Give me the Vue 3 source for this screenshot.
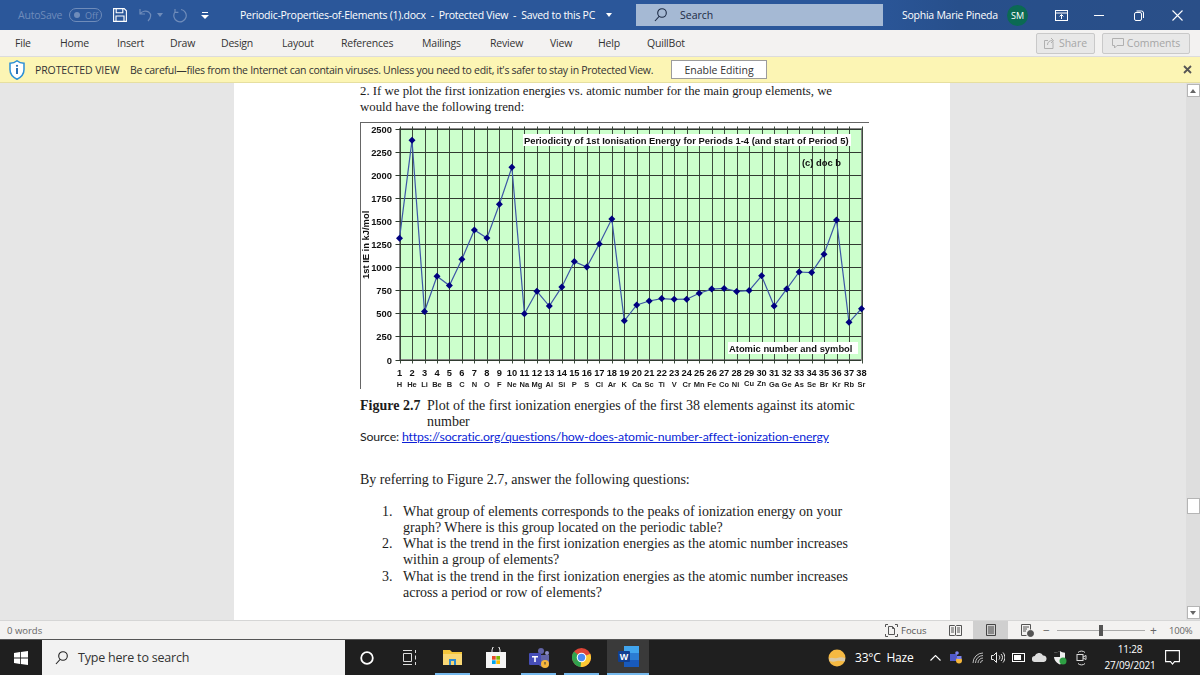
<template>
  <div class="app">
    <header class="titlebar">
      <span class="autosave">AutoSave</span>
      <span class="toggle"><i></i>Off</span>
      <svg class="save" width="14" height="14" viewBox="0 0 14 14" fill="none" stroke="#fff" stroke-width="1.1"><path d="M.6.6h10.6l2.2 2.2v10.6H.6z"/><path d="M3.2.8v4h6.6v-4M3 13.2V8h8v5.2"/></svg>
      <svg class="undo" width="15" height="14" viewBox="0 0 15 14" fill="none" stroke="#6f8cba" stroke-width="1.2"><path d="M1 1v5h5M1.3 5.8C3 3 7 2.4 9.6 4c3 2 2.6 6-.6 9"/></svg>
      <svg class="caret" width="6" height="4" viewBox="0 0 6 4" fill="#6f8cba"><path d="M0 0h6L3 4z"/></svg>
      <svg class="redo" width="15" height="15" viewBox="0 0 15 15" fill="none" stroke="#6f8cba" stroke-width="1.2"><path d="M9 1.5A6.2 6.2 0 1 1 3 4M3 1v3.4h3.4" /></svg>
      <svg class="qat" width="8" height="7" viewBox="0 0 8 7" fill="#fff"><path d="M1 0h6v1H1zM0 3h8L4 7z"/></svg>
      <span class="doctitle">Periodic-Properties-of-Elements (1).docx &nbsp;-&nbsp; Protected View &nbsp;-&nbsp; Saved to this PC</span>
      <svg class="titlecaret" width="6" height="4" viewBox="0 0 6 4" fill="#fff"><path d="M0 0h6L3 4z"/></svg>
      <div class="searchbox">
        <svg width="13" height="14" viewBox="0 0 13 14" fill="none" stroke="#1d2b45" stroke-width="1.1"><circle cx="8" cy="5" r="4.3"/><path d="M5 8.5 1 13"/></svg>
        <span>Search</span>
      </div>
      <span class="username">Sophia Marie Pineda</span>
      <span class="avatar">SM</span>
      <svg class="wbtn first" width="13" height="11" viewBox="0 0 13 11" fill="none" stroke="#fff"><rect x=".5" y=".5" width="12" height="10"/><path d="M.5 3h12M6.5 9V4.6M4.6 6.4l1.9-1.9 1.9 1.9"/></svg>
      <svg class="wbtn" width="10" height="10" viewBox="0 0 10 10" stroke="#fff"><path d="M0 5.5h10"/></svg>
      <svg class="wbtn restore" width="10" height="11" viewBox="0 0 10 11" fill="none" stroke="#fff"><rect x=".5" y="2.5" width="7" height="8" rx="1.5"/><path d="M2.5 1h5a2 2 0 0 1 2 2v5"/></svg>
      <svg class="wbtn" width="11" height="11" viewBox="0 0 11 11" stroke="#fff" stroke-width="1.1"><path d="m.5.5 10 10M10.500.5l-10 10"/></svg>
    </header>

    <nav class="ribbon">
      <div class="tabs">
        <span v-for="tab in tabs" :key="tab">{{ tab }}</span>
      </div>
      <button class="ghost share">
        <svg width="12" height="12" viewBox="0 0 12 12" fill="none" stroke="#b0b0b0"><path d="M9 4.500v7H.5V3.500H4M3.500 8c0-3 2-4.500 5-4.500M7 1l2.500 2.500L7 6"/></svg>
        Share
      </button>
      <button class="ghost comments">
        <svg width="12" height="11" viewBox="0 0 12 11" fill="none" stroke="#b0b0b0"><path d="M.5.5h11v7H5L2.500 10V7.500h-2z"/></svg>
        Comments
      </button>
    </nav>

    <div class="infobar">
      <svg class="shield" width="16" height="20" viewBox="0 0 16 20"><path d="M8 .8c2 1.700 4.300 2.400 7 2.500v6.200c0 4.500-3 7.800-7 9.700-4-1.900-7-5.200-7-9.700V3.300C3.700 3.200 6 2.500 8 .8z" fill="#fff" stroke="#2b8fd6" stroke-width="1.500"/><path d="M7 8h2v6H7z" fill="#2b6fb3"/><circle cx="8" cy="5.800" r="1.100" fill="#2b6fb3"/></svg>
      <strong>PROTECTED VIEW</strong>
      <span class="warning">Be careful—files from the Internet can contain viruses. Unless you need to edit, it's safer to stay in Protected View.</span>
      <button class="enable">Enable Editing</button>
      <svg class="infoclose" width="9" height="9" viewBox="0 0 9 9" stroke="#555" stroke-width="1.800"><path d="m1 1 7 7M8 1 1 8"/></svg>
    </div>

    <main class="workspace">
      <article class="page">
        <p class="line first">2. If we plot the first ionization energies vs. atomic number for the main group elements, we<br>would have the following trend:</p>

        <svg class="chart" width="520" height="270" viewBox="360 122 520 270">
          <path d="M360 122.500H869M360.500 122V389" stroke="#666" fill="none"/>
          <rect :x="plot.left" :y="plot.top" :width="plot.right - plot.left" :height="plot.bottom - plot.top" fill="#ccffcc" stroke="#8a8a8a"/>
          <path v-for="x in gridX" :key="'v' + x" :d="`M${x} ${plot.top - 2}V${plot.bottom + 4}`" stroke="#3c4a3c" stroke-width="1"/>
          <path v-for="t in yTicks" :key="'h' + t.value" :d="`M${plot.left - 4} ${t.y}H${plot.right}`" stroke="#2f3a2f" stroke-width="1"/>

          <rect x="523" y="134" width="328" height="12" fill="#fff"/>
          <text class="c-title" x="524" y="144">Periodicity of 1st Ionisation Energy for Periods 1-4 (and start of Period 5)</text>
          <text class="c-title" x="802" y="166">(c) doc b</text>
          <rect x="728" y="342" width="130" height="12" fill="#fff"/>
          <text class="c-title" x="729" y="352">Atomic number and symbol</text>

          <polyline :points="linePoints" fill="none" stroke="#3d57a6" stroke-width="1.200"/>
          <path v-for="p in points" :key="'m' + p.n" :d="`M${p.x} ${p.y - 3.500}l3.500 3.500-3.500 3.500-3.500-3.500z`" fill="#000080"/>

          <text v-for="t in yTicks" :key="'l' + t.value" class="c-y" x="392" :y="t.y + 3.500" text-anchor="end">{{ t.value }}</text>
          <text class="c-y" transform="translate(369 279) rotate(-90)">1st IE in kJ/mol</text>
          <template v-for="p in points" :key="'x' + p.n">
            <text class="c-n" :x="p.x" y="376" text-anchor="middle">{{ p.n }}</text>
            <text class="c-s" :x="p.x + p.dx" :y="p.sy" text-anchor="middle">{{ p.sym }}</text>
          </template>
        </svg>

        <div class="caption">
          <b>Figure 2.7</b>
          <span>Plot of the first ionization energies of the first 38 elements against its atomic number</span>
        </div>
        <p class="source">Source: <a>https://socratic.org/questions/how-does-atomic-number-affect-ionization-energy</a></p>
        <p class="line intro">By referring to Figure 2.7, answer the following questions:</p>
        <ol class="questions">
          <li v-for="(q, i) in questions" :key="i"><span>{{ i + 1 }}.</span><span v-html="q"></span></li>
        </ol>
      </article>
      <aside class="scrollbar">
        <span class="sbtn"><i class="up"></i></span>
        <span class="thumb"></span>
        <span class="sbtn"><i class="down"></i></span>
      </aside>
    </main>

    <footer class="status">
      <span class="words">0 words</span>
      <svg class="focusicon" width="13" height="13" viewBox="0 0 13 13" fill="none" stroke="#555"><path d="M.5 3V.5H3M10 .5h2.500V3M.5 10v2.500H3M10 12.500h2.500V10M3.500 2.500h4l2 2v6h-6zM7.500 2.500v2h2"/></svg>
      <span class="focus">Focus</span>
      <svg class="readicon" width="13" height="11" viewBox="0 0 13 11" fill="none" stroke="#555"><path d="M.5.500h5l1 1 1-1h5v10h-5l-1 .5-1-.5h-5zM6.500 1.500V10M2 3h3M2 5h3M2 7h3M8 3h3M8 5h3M8 7h3"/></svg>
      <span class="printview"><svg width="10" height="12" viewBox="0 0 10 12" fill="none" stroke="#444"><path d="M.5.500h9v11h-9zM2 3h6M2 5h6M2 7h6M2 9h6"/></svg></span>
      <svg class="webicon" width="13" height="13" viewBox="0 0 13 13" fill="none" stroke="#555"><path d="M.5.500h9v5M.5.500v11h5M2 3h6M2 5h4M2 7h3"/><circle cx="9.500" cy="9.500" r="3" fill="#555"/></svg>
      <div class="zoom">
        <span class="zm">−</span>
        <span class="slider"><i></i></span>
        <span class="zp">+</span>
        <span class="pct">100%</span>
      </div>
    </footer>

    <div class="taskbar">
      <svg class="start" width="14" height="14" viewBox="0 0 14 14" fill="#fff"><path d="M0 2l6-.9V6.600H0zM6.800 1 14 0v6.600H6.800zM0 7.400h6v5.500l-6-.9zM6.800 7.400H14V14l-7.200-1z"/></svg>
      <div class="tasksearch">
        <svg width="13" height="14" viewBox="0 0 13 14" fill="none" stroke="#222" stroke-width="1.100"><circle cx="8" cy="5" r="4.300"/><path d="M5 8.500 1 13"/></svg>
        <span>Type here to search</span>
      </div>
      <div class="apps">
        <span class="app-slot"><svg width="14" height="14" viewBox="0 0 14 14" fill="none" stroke="#fff" stroke-width="1.800"><circle cx="7" cy="7" r="5.800"/></svg></span>
        <span class="app-slot"><svg width="16" height="15" viewBox="0 0 16 15" fill="none" stroke="#ddd"><path d="M1 .5h9M1 14.500h9M1.500 3.500h8v8h-8zM13.500 0v3M13.500 5.500v4M13.500 12v3"/></svg></span>
        <span class="app-slot on"><svg width="19" height="17" viewBox="0 0 19 17"><path d="M0 1h7l2 2h10v12H0z" fill="#f3c53c"/><path d="M0 5h19v11H0z" fill="#f8d775"/><path d="M6 10h7v6H6z" fill="#2d8ad0"/><path d="M8 12h3v4H8z" fill="#f8d775"/></svg></span>
        <span class="app-slot"><svg width="20" height="21" viewBox="0 0 20 21"><path d="M6 6V3a4 4 0 0 1 8 0v3" fill="none" stroke="#eee"/><path d="M0 5h20v16H0z" fill="#f5f5f5"/><path d="M6 9h3.700v3.700H6z" fill="#e74a25"/><path d="M10.300 9H14v3.700h-3.700z" fill="#7eb900"/><path d="M6 13.300h3.700V17H6z" fill="#00a4ef"/><path d="M10.300 13.300H14V17h-3.700z" fill="#fbb900"/></svg></span>
        <span class="app-slot on"><svg width="22" height="22" viewBox="0 0 22 22"><circle cx="13" cy="4" r="3" fill="#6264a7"/><circle cx="19" cy="6" r="2" fill="#8b8cc7"/><path d="M10 8h11v8a4 4 0 0 1-4 4h-2a5 5 0 0 1-5-5z" fill="#6264a7"/><rect x="1" y="6" width="12" height="12" rx="1" fill="#464eb8"/><path d="M4 9h6v1.500H7.800V15H6.200v-4.500H4z" fill="#fff"/><circle cx="17" cy="17" r="4" fill="#f6b73c"/><path d="M17 15v2.500" stroke="#333"/></svg></span>
        <span class="app-slot on"><svg width="19" height="19" viewBox="0 0 19 19"><circle cx="9.500" cy="9.500" r="9.500" fill="#de4437"/><path d="M9.500 9.500 18.200 5.800A9.500 9.500 0 0 1 8 18.900z" fill="#fcc934" /><path d="M9.500 9.500 1.300 14.300A9.500 9.500 0 0 0 8.500 19z" fill="#2fa44f"/><path d="M9.500 9.500 1.300 14.300A9.500 9.500 0 0 1 2 3.600z" fill="#2fa44f"/><circle cx="9.500" cy="9.500" r="4.800" fill="#fff"/><circle cx="9.500" cy="9.500" r="3.700" fill="#4a8af4"/></svg></span>
        <span class="app-word"><svg width="21" height="21" viewBox="0 0 21 21"><path d="M6 0h15v7H6z" fill="#41a5ee"/><path d="M6 7h15v7H6z" fill="#2b7cd3"/><path d="M6 14h15v7H6z" fill="#185abd"/><rect y="5" width="12" height="11" rx="1" fill="#103f91"/><text x="6" y="14" class="wordw" text-anchor="middle">W</text></svg></span>
      </div>
      <div class="tray">
        <svg class="weather" width="18" height="18" viewBox="0 0 18 18"><circle cx="9" cy="9" r="8.500" fill="#f5b942"/><path d="M1 9.500c3-2 5 .5 8-.5s5-1 8 0v3c-3 1-5-1-8 0s-5 1-7.500 0z" fill="#d9c9a8"/></svg>
        <span class="temp">33°C &nbsp;Haze</span>
        <svg class="t-up" width="11" height="6" viewBox="0 0 11 6" fill="none" stroke="#fff" stroke-width="1.100"><path d="m.5 5.500 5-5 5 5"/></svg>
        <svg class="t-teams" width="12" height="13" viewBox="0 0 12 13"><rect y="3" width="7" height="7" fill="#5059c9"/><circle cx="7" cy="2" r="1.800" fill="#7b83eb"/><circle cx="9" cy="9.500" r="3" fill="#f6b73c"/><path d="M7 5h4.500v3H7z" fill="#7b83eb"/></svg>
        <svg class="t-wifi" width="12" height="12" viewBox="0 0 12 12" fill="none" stroke="#bbb"><path d="M1 11a10 10 0 0 1 10-10M3.500 11A7.500 7.500 0 0 1 11 3.500M6 11a5 5 0 0 1 5-5M8.500 11A2.500 2.500 0 0 1 11 8.500"/></svg>
        <svg class="t-vol" width="14" height="13" viewBox="0 0 14 13" fill="none" stroke="#eee"><path d="M.5 4.500h2l3-3v10l-3-3h-2zM8 4.500c1 1 1 3 0 4M10 3c2 2 2 5 0 7M12 1.500c2.500 3 2.500 7 0 10"/></svg>
        <svg class="t-bat" width="13" height="9" viewBox="0 0 13 9"><rect x=".5" y=".5" width="12" height="8" fill="none" stroke="#fff"/><rect x="2" y="2" width="7" height="5" fill="#fff"/></svg>
        <svg class="t-cloud" width="15" height="9" viewBox="0 0 15 9" fill="#ddd"><path d="M3 9a3 3 0 0 1-.3-6A4.500 4.500 0 0 1 11 2.500 3.300 3.300 0 0 1 12 9z"/></svg>
        <svg class="t-shield" width="13" height="14" viewBox="0 0 13 14"><path d="M6 0c1.500 1 3 1.500 5 1.700v4C11 9.500 9 12 6 13.500 3 12 0 9.500 0 5.700v-4C2.500 1.500 4 1 6 0z" fill="#eee"/><path d="M6 0v6H0V1.700C2.500 1.500 4 1 6 0z" fill="#222"/><circle cx="9" cy="10" r="3.500" fill="#2e9f44"/></svg>
        <svg class="t-meet" width="11" height="16" viewBox="0 0 11 16" fill="none" stroke="#ddd"><path d="M2 2.500a5 5 0 0 1 7 0M2 13.500a5 5 0 0 0 7 0"/><rect x="1" y="4.500" width="6" height="6"/><path d="m7 7 3-1.500v4L7 8"/></svg>
        <div class="clock"><span>11:28</span><span>27/09/2021</span></div>
        <svg class="notify" width="15" height="15" viewBox="0 0 15 15" fill="none" stroke="#fff" stroke-width="1.100"><path d="M.6.6h13.800v11H9.500l-2 2.500-2-2.500H.6z"/></svg>
      </div>
    </div>
  </div>
</template>

<script setup>
import { computed } from "vue";

const tabs = ["File", "Home", "Insert", "Draw", "Design", "Layout", "References", "Mailings", "Review", "View", "Help", "QuillBot"];

const questions = [
  "What group of elements corresponds to the peaks of ionization energy on your<br>graph? Where is this group located on the periodic table?",
  "What is the trend in the first ionization energies as the atomic number increases<br>within a group of elements?",
  "What is the trend in the first ionization energies as the atomic number increases<br>across a period or row of elements?"
];

const plot = { left: 399.5, right: 861.5, top: 128.5, bottom: 359.5 };

const symbols = "H He Li Be B C N O F Ne Na Mg Al Si P S Cl Ar K Ca Sc Ti V Cr Mn Fe Co Ni Cu Zn Ga Ge As Se Br Kr Rb Sr".split(" ");
const energies = [1312, 2372, 520, 900, 801, 1086, 1402, 1314, 1681, 2081, 496, 738, 578, 786, 1060, 1000, 1251, 1521, 419, 590, 633, 659, 651, 653, 717, 762, 770, 737, 746, 906, 579, 762, 947, 941, 1140, 1510, 403, 550];

const stepX = (plot.right - plot.left) / 37;
const scaleY = (plot.bottom - plot.top) / 2500;

const points = energies.map((e, i) => ({
  n: i + 1,
  sym: symbols[i],
  x: +(plot.left + i * stepX).toFixed(1),
  y: +(plot.bottom - e * scaleY).toFixed(1),
  dx: symbols[i] === "Ni" ? -1 : 0,
  sy: symbols[i] === "Cu" || symbols[i] === "Zn" ? 386 : 387
}));

const gridX = points.map((p) => Math.round(p.x) + 0.5);
const yTicks = Array.from({ length: 11 }, (_, i) => ({
  value: i * 250,
  y: Math.round(plot.bottom - i * 250 * scaleY) + 0.5
}));

const linePoints = computed(() => points.map((p) => `${p.x},${p.y}`).join(" "));
</script>

<style>
html, body { margin: 0; padding: 0; overflow: hidden; }
</style>

<style scoped>
.app {
  width: 1200px;
  height: 675px;
  display: flex;
  flex-direction: column;
  font-family: "Open Sans", "Liberation Sans", sans-serif;
  overflow: hidden;
  background: #e6e6e6;
}

.titlebar {
  height: 30px;
  flex: none;
  display: flex;
  align-items: center;
  background: linear-gradient(90deg, #2b579a 0%, #2b579a 72%, #274f8b 80%, #2a4f88 100%);
  color: #fff;
  font-size: 10.5px;
}
.autosave { margin-left: 18px; width: 51px; color: #6f8cba; letter-spacing: -0.2px; }
.toggle {
  width: 33px;
  height: 14px;
  margin-right: 11px;
  box-sizing: border-box;
  border: 1px solid #6f8cba;
  border-radius: 7px;
  display: flex;
  align-items: center;
  gap: 5px;
  padding-left: 4px;
  color: #6f8cba;
  font-size: 9px;
}
.toggle i { width: 6px; height: 6px; border-radius: 50%; background: #6f8cba; }
.save { margin-right: 12px; }
.undo { margin-right: 3px; }
.caret { margin-right: 9px; }
.redo { margin-right: 14px; }
.qat { margin-right: 31px; }
.doctitle { width: 366px; white-space: nowrap; letter-spacing: -0.27px; }
.titlecaret { margin-right: 24px; }
.searchbox {
  width: 247px;
  height: 22px;
  display: flex;
  align-items: center;
  gap: 13px;
  padding-left: 18px;
  box-sizing: border-box;
  background: #a5b9d4;
  color: #1d2b45;
  margin-right: 19px;
}
.username { width: 105px; white-space: nowrap; letter-spacing: -0.25px; }
.avatar {
  width: 21px;
  height: 21px;
  border-radius: 50%;
  background: #0b6a53;
  font-size: 9px;
  display: flex;
  align-items: center;
  justify-content: center;
}
.wbtn { margin-left: 28px; }
.wbtn.first { margin-left: 27px; margin-right: -2px; }
.wbtn.restore { margin-left: 30px; }

.ribbon {
  height: 27px;
  flex: none;
  display: flex;
  align-items: center;
  background: #f3f2f1;
  border-bottom: 1px solid #dcdcdc;
  box-sizing: border-box;
  font-size: 10.5px;
  color: #333;
}
.tabs {
  display: grid;
  grid-template-columns: 45px 57px 53px 51px 61px 59px 81px 68px 60px 48px 49px 60px;
  margin-left: 15px;
  width: 1021px;
  letter-spacing: -0.2px;
}
.ghost {
  height: 21px;
  box-sizing: border-box;
  border: 1px solid #c9c9c9;
  border-radius: 2px;
  background: #e8e8e8;
  color: #a6a6a6;
  font: inherit;
  display: flex;
  align-items: center;
  justify-content: center;
  gap: 3px;
  padding: 0;
}
.share { width: 59px; margin-right: 7px; }
.comments { width: 88px; }

.infobar {
  height: 26px;
  flex: none;
  box-sizing: border-box;
  display: flex;
  align-items: center;
  background: #fcf5b4;
  border-bottom: 1px solid #e6dfa0;
  font-size: 10.5px;
  color: #333;
  letter-spacing: -0.28px;
}
.shield { margin-left: 9px; margin-right: 10px; }
.infobar strong { font-weight: 400; width: 95px; white-space: nowrap; letter-spacing: -0.1px; }
.warning { width: 541px; white-space: nowrap; }
.enable {
  width: 96px;
  height: 19px;
  background: #fff;
  border: 1px solid #9c9c9c;
  font: inherit;
  color: #333;
  padding: 0;
}
.infoclose { margin-left: 416px; }

.workspace {
  flex: 1;
  min-height: 0;
  display: flex;
  justify-content: space-between;
  overflow: hidden;
}
.page {
  width: 716px;
  margin-left: 234px;
  background: #fff;
  padding-left: 126px;
  box-sizing: border-box;
  font-family: "Liberation Serif", serif;
  font-size: 14px;
  line-height: 16px;
  color: #1c1c1c;
}
.line { margin: 0; white-space: nowrap; }
.line.first { font-size: 12.8px; }
.chart { display: block; margin-top: 7px; overflow: visible; filter: blur(0.3px); }
.c-title { font: bold 9.4px "Liberation Sans", sans-serif; fill: #111; }
.c-y { font: bold 9.4px "Liberation Sans", sans-serif; fill: #111; }
.c-n { font: bold 9.3px "Liberation Sans", sans-serif; fill: #111; }
.c-s { font: bold 7.5px "Liberation Sans", sans-serif; fill: #222; }
.caption {
  display: grid;
  grid-template-columns: 67px 430px;
  margin-top: 6px;
}
.caption b { white-space: nowrap; }
.source {
  margin: -1px 0 0;
  font-family: Lato, "Liberation Sans", sans-serif;
  font-size: 12.3px;
  letter-spacing: -0.15px;
  white-space: nowrap;
}
.source a { color: #0b1fd6; text-decoration: underline; }
.intro { margin-top: 27px; }
.questions {
  list-style: none;
  margin: 16px 0 0;
  padding: 0 0 0 22px;
}
.questions li {
  display: grid;
  grid-template-columns: 21px auto;
  white-space: nowrap;
}
.questions li:last-child { margin-top: 1px; }

.scrollbar {
  width: 14px;
  background: #dedede;
  display: flex;
  flex-direction: column;
  align-items: center;
  padding-top: 1px;
  box-sizing: border-box;
}
.sbtn {
  width: 13px;
  height: 13px;
  box-sizing: border-box;
  background: #fff;
  border: 1px solid #b5b5b5;
  display: flex;
  align-items: center;
  justify-content: center;
}
.sbtn i { width: 0; height: 0; border-left: 3.5px solid transparent; border-right: 3.5px solid transparent; }
.up { border-bottom: 4px solid #666; }
.down { border-top: 4px solid #666; }
.thumb {
  width: 13px;
  height: 16px;
  margin-top: 401px;
  margin-bottom: 92px;
  background: #fff;
  border: 1px solid #b5b5b5;
  box-sizing: border-box;
}

.status {
  height: 19px;
  flex: none;
  display: flex;
  align-items: center;
  background: #f3f2f1;
  border-top: 1px solid #d6d6d6;
  box-sizing: border-box;
  color: #666;
  font-size: 9.5px;
}
.words { margin-left: 7px; width: 878px; }
.focus { margin-left: 3px; width: 48px; color: #555; }
.readicon { margin-right: 11px; }
.printview {
  width: 35px;
  height: 18px;
  background: #cfcfcf;
  display: flex;
  align-items: center;
  justify-content: center;
}
.webicon { margin-left: 13px; }
.zoom { display: flex; align-items: center; margin-left: 9px; }
.zm { width: 14px; font-size: 12px; }
.slider { position: relative; width: 88px; height: 1px; background: #aaa; }
.slider i { position: absolute; left: 42px; top: -5px; width: 4px; height: 11px; background: #555; }
.zp { width: 11px; margin-left: 5px; font-size: 12px; }
.pct { margin-left: 8px; letter-spacing: -0.2px; }

.taskbar {
  height: 36px;
  flex: none;
  display: flex;
  align-items: center;
  background: #1f1f1f;
  border-top: 1px solid #555;
  box-sizing: border-box;
}
.start { margin-left: 14px; margin-right: 14px; }
.tasksearch {
  width: 303px;
  height: 35px;
  box-sizing: border-box;
  display: flex;
  align-items: center;
  gap: 10px;
  padding-left: 13px;
  background: #f2f2f2;
  color: #333;
  font-size: 12.5px;
  letter-spacing: -0.2px;
}
.apps { display: flex; align-items: center; height: 35px; }
.app-slot {
  width: 43px;
  height: 35px;
  box-sizing: border-box;
  display: flex;
  align-items: center;
  justify-content: center;
}
.app-slot.on { position: relative; }
.app-slot.on::after {
  content: "";
  position: absolute;
  left: 4px;
  right: 4px;
  bottom: 0;
  height: 2px;
  background: #76b9ed;
}
.app-word {
  width: 42px;
  height: 35px;
  margin-left: 4px;
  box-sizing: border-box;
  background: #3a3a3a;
  border-bottom: 2px solid #76b9ed;
  display: flex;
  align-items: center;
  justify-content: center;
}
.wordw { font: bold 9px "Liberation Sans", sans-serif; fill: #fff; }
.tray { display: flex; align-items: center; margin-left: 179px; color: #fff; font-size: 12px; }
.temp { margin-left: 9px; width: 71px; white-space: nowrap; letter-spacing: -0.2px; }
.t-up { margin-left: 4px; }
.t-teams { margin-left: 9px; }
.t-wifi { margin-left: 10px; }
.t-vol { margin-left: 7px; }
.t-bat { margin-left: 7px; }
.t-cloud { margin-left: 7px; }
.t-shield { margin-left: 7px; }
.t-meet { margin-left: 9px; }
.clock {
  width: 62px;
  margin-left: 12px;
  display: flex;
  flex-direction: column;
  align-items: center;
  gap: 3px;
  font-size: 10px;
  line-height: 13px;
  letter-spacing: -0.2px;
}
.notify { margin-left: 4px; }
</style>
